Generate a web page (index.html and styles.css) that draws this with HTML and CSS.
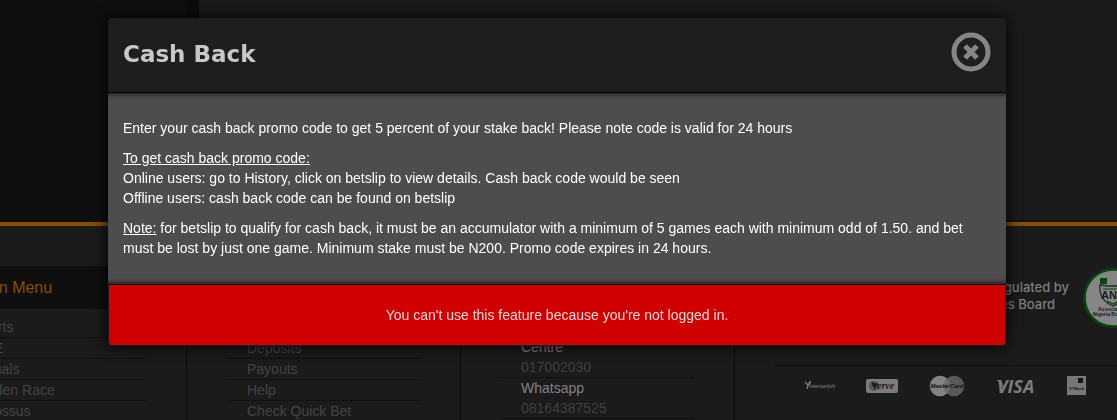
FILE: index.html
```html
<!DOCTYPE html>
<html lang="en">
<head>
<meta charset="utf-8">
<title>Cash Back</title>
<link rel="stylesheet" href="styles.css">
</head>
<body>
<div class="page">
  <div class="content"><div class="sidebar"></div><div class="main"></div></div>
  <footer class="footer">
    <section class="col col-menu">
      <h2 class="menu-title">Main Menu</h2>
      <ul class="links">
        <li><a href="#">Sports</a></li>
        <li><a href="#">LIVE</a></li>
        <li><a href="#">Virtuals</a></li>
        <li><a href="#">Golden Race</a></li>
        <li><a href="#">Colossus</a></li>
      </ul>
    </section>
    <section class="col col-help">
      <ul class="links">
        <li><a href="#">Deposits</a></li>
        <li><a href="#">Payouts</a></li>
        <li><a href="#">Help</a></li>
        <li><a href="#">Check Quick Bet</a></li>
      </ul>
    </section>
    <section class="col col-contact">
      <dl class="contacts">
        <div class="contact"><dt>Centre</dt><dd>017002030</dd></div>
        <div class="contact"><dt>Whatsapp</dt><dd>08164387525</dd></div>
      </dl>
    </section>
    <section class="col-info">
      <div class="licence">
        <p class="licence-text">Regulated by<br><span class="licence-board">Lotteries Board</span></p>
        <svg class="badge" viewBox="0 0 60 60" role="img" aria-label="Association of Nigeria Bookmakers">
          <circle cx="30" cy="30" r="28.5" fill="#858585" stroke="#00480e" stroke-width="2.6"/>
          <path d="M17 10h26v6H17z" fill="#00480e"/>
          <path d="M24 9h11v7l-5 2-6-2z" fill="#858585"/>
          <path d="M17 17l8 1h10l8-1c1 10-3 17-13 21-10-4-14-11-13-21z" fill="#858585" stroke="#1a3020" stroke-width="1.3"/>
          <path d="M20 21h20M24 33l6 3 6-3" fill="none" stroke="#00480e" stroke-width="1.2"/>
          <text x="30" y="31" class="badge-name" text-anchor="middle">ANB</text>
          <text x="15" y="43" class="badge-small">Association of</text>
          <text x="10" y="48" class="badge-small">Nigeria Bookmakers</text>
        </svg>
      </div>
      <div class="payments">
        <svg width="30" height="22" viewBox="0 0 30 22" role="img" aria-label="Interswitch">
          <path d="M0 7l3 3 2-3M3 10l-1 4M5 7l-1 3" fill="none" stroke="#858585" stroke-width="1.2"/>
          <circle cx="5" cy="7" r="1" fill="#858585"/>
          <text x="4" y="13" class="inter-name">Interswitch</text>
        </svg>
        <svg width="32" height="22" viewBox="0 0 32 22" role="img" aria-label="Verve">
          <rect y="4" width="32" height="14" rx="2" fill="#7b7b7b"/>
          <circle cx="8" cy="11" r="5" fill="#575757"/>
          <path d="M5 7l4 8 1-4 3-2z" fill="#1b1b1b"/>
          <text x="11" y="14" class="verve-name">erve</text>
        </svg>
        <svg width="36" height="22" viewBox="0 0 36 22" role="img" aria-label="MasterCard">
          <circle cx="11" cy="11" r="10.3" fill="#838383"/>
          <circle cx="25" cy="11" r="10.3" fill="#595959"/>
          <path d="M18 3.5a10.3 10.3 0 0 1 0 15 10.3 10.3 0 0 1 0-15z" fill="#6d6d6d"/>
          <text x="18" y="13" class="mc-name" text-anchor="middle">MasterCard</text>
        </svg>
        <svg width="40" height="22" viewBox="0 0 40 22" role="img" aria-label="Visa">
          <path d="M0 5h5l3 8-1 1C6 9 3 6 0 5z" fill="#7b7b7b"/>
          <text x="1" y="18" class="visa-name">VISA</text>
        </svg>
        <svg width="20" height="22" viewBox="0 0 20 22" role="img" aria-label="GTBank">
          <rect y="1" width="19" height="19" fill="#777"/>
          <rect x="11" y="3" width="5" height="5" fill="#151515"/>
          <text x="9.5" y="15" class="gt-name" text-anchor="middle">GTBank</text>
        </svg>
      </div>
    </section>
  </footer>
</div>

<div class="modal" role="dialog" aria-modal="true" aria-labelledby="modal-title">
  <header class="modal-header">
    <h1 class="modal-title" id="modal-title">Cash Back</h1>
    <button class="close" type="button" aria-label="Close">
      <svg viewBox="0 0 40 40" width="40" height="40" aria-hidden="true">
        <circle cx="20" cy="20" r="17" fill="none" stroke="#868686" stroke-width="5"/>
        <path d="M14 14l12 12M26 14L14 26" stroke="#868686" stroke-width="5"/>
      </svg>
    </button>
  </header>
  <div class="modal-body">
    <p>Enter your cash back promo code to get 5 percent of your stake back! Please note code is valid for 24 hours</p>
    <p><u>To get cash back promo code:</u><br>Online users: go to History, click on betslip to view details. Cash back code would be seen<br>Offline users: cash back code can be found on betslip</p>
    <p><u>Note:</u> for betslip to qualify for cash back, it must be an accumulator with a minimum of 5 games each with minimum odd of 1.50. and bet must be lost by just one game. Minimum stake must be N200. Promo code expires in 24 hours.</p>
  </div>
  <div class="modal-alert" role="alert">You can't use this feature because you're not logged in.</div>
</div>
</body>
</html>
```
FILE: styles.css
```css
* {
  box-sizing: border-box;
}

body {
  margin: 0;
  background: #1b1b1b;
  font: 14px/20px "Liberation Sans", Arial, sans-serif;
  overflow: hidden;
}

h1, h2, p, ul, dl, dd {
  margin: 0;
  padding: 0;
}

.page {
  height: 100vh;
  overflow: hidden;
}

.content {
  display: flex;
  height: 222px;
}

.sidebar {
  width: 199px;
  background: #0f0f0f;
  border-right: 12px solid #0b0b0b;
}

.main {
  flex: 1;
  background: #1b1b1b;
  border-bottom: 2px solid #121212;
}

/* Footer */

.footer {
  display: grid;
  grid-template-columns: 274px 274px 274px 1fr;
  min-height: 200px;
  border-top: 4px solid #854e00;
  margin-left: -87px;
}

.col {
  border-right: 1px solid #0c0c0c;
}

.col-menu {
  padding-top: 40px;
}

.col-help {
  padding-top: 112px;
}

.col-contact {
  padding-top: 111px;
}

.menu-title {
  padding: 0 60px;
  margin-bottom: 8px;
  background: #0f0f0f;
  color: #854e00;
  font-size: 16px;
  font-weight: 400;
  line-height: 43px;
}

.links {
  list-style: none;
  padding: 0 40px;
}

.links li {
  padding-left: 20px;
  border-bottom: 1px dotted #070707;
}

.links a {
  color: #434343;
  text-decoration: none;
}

.contacts {
  padding: 0 40px;
}

.contact {
  padding-left: 20px;
  border-bottom: 1px dotted #070707;
}

.contact dt {
  color: #828282;
}

.contact dd {
  color: #404040;
}

.col-info {
  padding-left: 40px;
}

.licence {
  display: flex;
  justify-content: flex-end;
  gap: 14px;
  height: 140px;
  padding-top: 42px;
  margin-right: -26px;
  border-bottom: 1px dotted #070707;
}

.licence-text {
  padding-top: 11px;
  color: #7d7d7d;
  font: 500 13px/17px Inter, sans-serif;
  text-align: right;
}

.licence-board {
  padding-right: 14px;
}

.badge {
  width: 60px;
  height: 60px;
}

.badge-name {
  font: 700 11px "Liberation Sans", sans-serif;
  fill: #15201a;
}

.badge-small {
  font: 700 5px "Liberation Sans", sans-serif;
  fill: #1b1b1b;
}

.payments {
  display: flex;
  gap: 31px;
  padding: 9px 0 0 30px;
}

.inter-name {
  font: 700 5px "Liberation Sans", sans-serif;
  fill: #6b6b6b;
}

.verve-name {
  font: italic 700 10px "Liberation Serif", serif;
  fill: #1b1b1b;
}

.mc-name {
  font: italic 700 6px "Liberation Sans", sans-serif;
  fill: #111;
}

.visa-name {
  font: italic 700 18px "Open Sans", sans-serif;
  fill: #7b7b7b;
}

.gt-name {
  font: 700 4px "Liberation Sans", sans-serif;
  fill: #1b1b1b;
}

/* Dialog */

.modal {
  position: fixed;
  top: 18px;
  left: 108px;
  right: 111px;
  background: #1e1e1e;
  border-radius: 3px;
  box-shadow: 0 0 15px #000;
}

.modal-header {
  display: flex;
  align-items: flex-start;
  justify-content: space-between;
  padding: 14px 15px 16px;
  border-bottom: 1px solid #000;
}

.modal-title {
  color: #c8c8c8;
  font: 700 23px/44px "DejaVu Sans", Verdana, sans-serif;
}

.close {
  width: 40px;
  height: 40px;
  padding: 0;
  border: 0;
  background: none;
  cursor: pointer;
}

.close svg {
  display: block;
}

.modal-body {
  padding: 25px 15px 26px;
  background: #4d4d4d;
  box-shadow: inset 0 6px 4px -4px #222, inset 0 -6px 4px -4px #222;
  color: #fff;
}

.modal-body p + p {
  margin-top: 10px;
}

.modal-alert {
  padding: 20px;
  margin: 0 1px 1px;
  border-top: 1px solid #000;
  border-radius: 0 0 3px 3px;
  background: #d00000;
  color: #f0d8d8;
  text-align: center;
}
```
